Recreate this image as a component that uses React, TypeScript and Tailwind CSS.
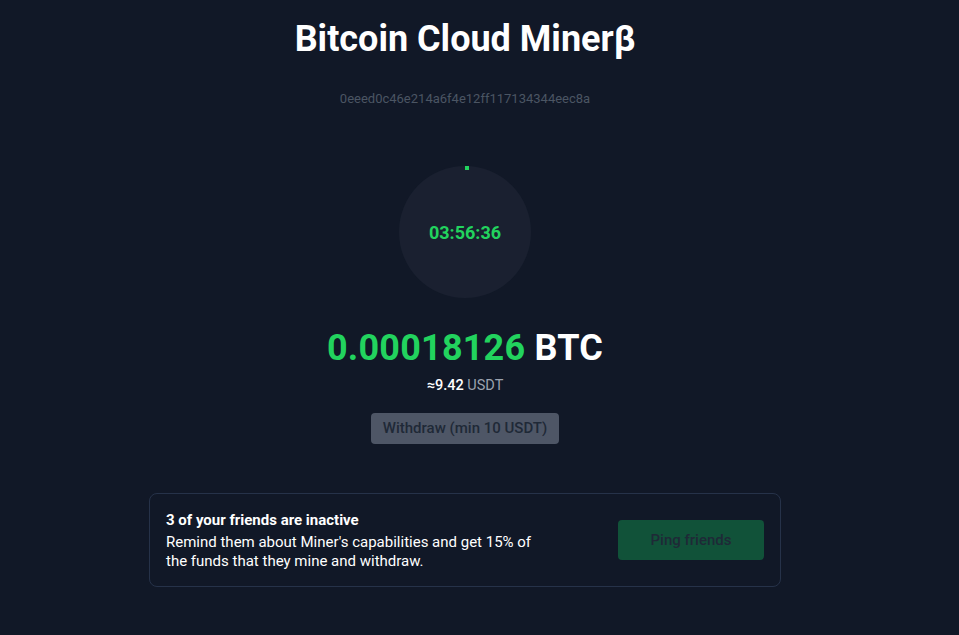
const App: React.FC = () => {
  return (
    <div className="min-h-[635px] w-full bg-[#111827] font-['Roboto',sans-serif]">
      <div className="w-[930px] flex flex-col items-center pt-[17px]">
        {/* Header */}
        <h1 className="text-[36px] font-bold text-white leading-[44px]">
          Bitcoin Cloud Minerβ
        </h1>
        <p className="mt-[30px] text-[13px] text-[#4b5563] leading-[16px]">
          0eeed0c46e214a6f4e12ff117134344eec8a
        </p>

        {/* Timer */}
        <div className="relative mt-[59px] w-[132px] h-[132px] rounded-full bg-[#1a2030] flex items-center justify-center">
          <div className="absolute left-[66px] top-0 w-[4px] h-[4px] bg-[#22d35e]" />
          <span className="text-[18px] font-bold text-[#22d35e]">03:56:36</span>
        </div>

        {/* Balance */}
        <div className="mt-[28px] text-[36px] font-bold leading-[44px] tracking-[0.2px]">
          <span className="text-[#22d35e]">0.00018126</span>{' '}
          <span className="text-white">BTC</span>
        </div>
        <div className="mt-[6px] text-[14.5px] leading-[20px]">
          <span className="text-white font-medium">≈9.42</span>{' '}
          <span className="text-[#9ca3af]">USDT</span>
        </div>
        <button className="mt-[17px] h-[31px] px-[12px] rounded-[4px] bg-[#4e5666] text-[#1f2937] text-[15px] font-medium">
          Withdraw (min 10 USDT)
        </button>

        {/* Friends card */}
        <div className="mt-[49px] w-[632px] h-[94px] rounded-[8px] border border-[#263249] flex items-center justify-between pl-[16px] pr-[16px]">
          <div className="flex flex-col">
            <p className="text-[15px] font-bold text-white leading-[20px]">
              3 of your friends are inactive
            </p>
            <p className="mt-[3px] w-[385px] text-[15px] text-white leading-[19px]">
              Remind them about Miner's capabilities and get 15% of the funds
              that they mine and withdraw.
            </p>
          </div>
          <button className="w-[146px] h-[40px] rounded-[4px] bg-[#115239] text-[#1f2937] text-[15px] font-medium">
            Ping friends
          </button>
        </div>
      </div>
    </div>
  );
};

export default App;
